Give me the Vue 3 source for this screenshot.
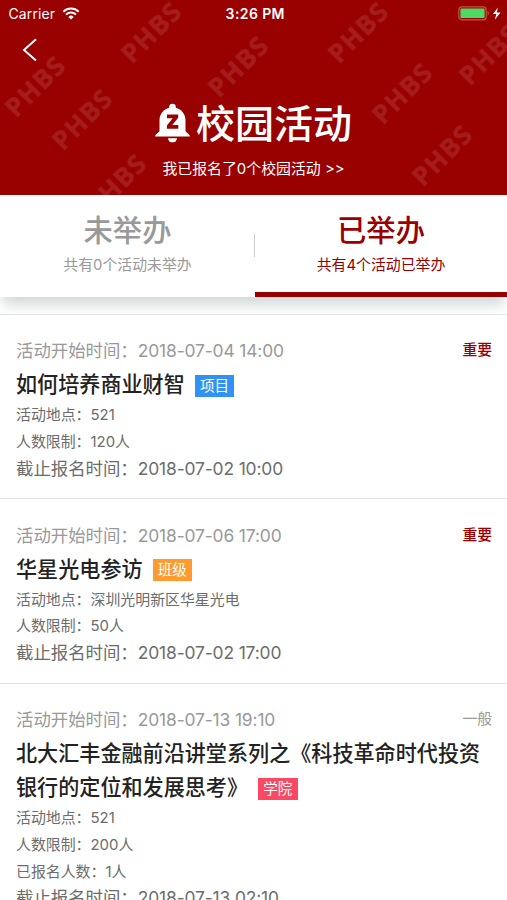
<script setup>
import { ref } from 'vue';

const activeTab = ref(1);

const watermarks = [
  { x: 35, y: 87 },
  { x: 82, y: 120 },
  { x: 151, y: 33 },
  { x: 116, y: 185 },
  { x: 238, y: 67 },
  { x: 358, y: 33 },
  { x: 402, y: 94 },
  { x: 489, y: 55 },
  { x: 442, y: 156 },
];

const tabs = [
  { title: '未举办', desc: '共有0个活动未举办' },
  { title: '已举办', desc: '共有4个活动已举办' },
];

const activities = [
  {
    start: '2018-07-04 14:00',
    level: '重要',
    title: '如何培养商业财智',
    tag: '项目',
    tagClass: 'blue',
    info: [['活动地点', '521'], ['人数限制', '120人']],
    deadline: '2018-07-02 10:00',
  },
  {
    start: '2018-07-06 17:00',
    level: '重要',
    title: '华星光电参访',
    tag: '班级',
    tagClass: 'orange',
    info: [['活动地点', '深圳光明新区华星光电'], ['人数限制', '50人']],
    deadline: '2018-07-02 17:00',
  },
  {
    start: '2018-07-13 19:10',
    level: '一般',
    title: '北大汇丰金融前沿讲堂系列之《科技革命时代投资银行的定位和发展思考》',
    tag: '学院',
    tagClass: 'pink',
    info: [['活动地点', '521'], ['人数限制', '200人'], ['已报名人数', '1人']],
    deadline: '2018-07-13 02:10',
  },
];
</script>

<template>
  <div class="page">
    <header class="header">
      <svg class="watermark" width="507" height="195" viewBox="0 0 507 195">
        <text
          v-for="(w, i) in watermarks"
          :key="i"
          :transform="`translate(${w.x} ${w.y}) rotate(-45)`"
          x="0"
          y="9"
          text-anchor="middle"
          textLength="72"
        >PHBS</text>
      </svg>

      <div class="status-bar">
        <div class="carrier">
          <span>Carrier</span>
          <svg width="18" height="13" viewBox="0 0 18 13">
            <path d="M1.3 4.7a11 11 0 0 1 15.4 0" fill="none" stroke="#fff" stroke-width="2" />
            <path d="M4 7.6a7.2 7.2 0 0 1 10 0" fill="none" stroke="#fff" stroke-width="2" />
            <path d="M9 12.6 6.3 9.9a3.9 3.9 0 0 1 5.4 0z" fill="#fff" />
          </svg>
        </div>
        <div class="clock">3:26 PM</div>
        <div class="power">
          <svg width="44" height="16" viewBox="0 0 44 16">
            <rect x="0.8" y="0.8" width="27.4" height="13" rx="3" fill="none" stroke="#c8553f" stroke-width="1.2" />
            <rect x="2.4" y="2.5" width="24.2" height="9.6" rx="1" fill="#4cd964" />
            <path d="M29.6 5.1c1.6.6 1.6 4 0 4.600z" fill="#c8553f" />
            <path d="M39.900 1.500 35 8.100h3.400l-1.600 5.700 5.700-7.300h-3.700z" fill="#fff" />
          </svg>
        </div>
      </div>

      <div class="nav">
        <svg width="16" height="24" viewBox="0 0 16 24">
          <path d="M14 1.300 2 12l12 10.600" fill="none" stroke="#fff" stroke-width="2" />
        </svg>
      </div>

      <div class="banner">
        <svg width="35" height="40" viewBox="0 0 35 40">
          <path
            fill="#fff"
            fill-rule="evenodd"
            d="M17.5.8a3.3 3.3 0 0 1 3.3 3.3v.7c6 1.5 9.7 6.6 9.7 12.7v10.3c0 1.6 4.4 3.2 4.4 5.6H.1c0-2.4 4.4-4 4.4-5.6V17.5c0-6.1 3.7-11.2 9.7-12.7v-.7A3.3 3.3 0 0 1 17.5.8zM12 11.4v3.9h5.7L11.9 22.4v3.4h11.4v-3.9h-6l5.9-7.1v-3.4z"
          />
          <path d="M13 35.3h9a4.5 4 0 0 1-9 0z" fill="#fff" />
        </svg>
        <h1>校园活动</h1>
      </div>
      <div class="signed">我已报名了0个校园活动 &gt;&gt;</div>
    </header>

    <div class="tabs">
      <div
        v-for="(tab, i) in tabs"
        :key="i"
        class="tab"
        :class="{ active: activeTab === i }"
        @click="activeTab = i"
      >
        <div class="tab-title">{{ tab.title }}</div>
        <div class="tab-desc">{{ tab.desc }}</div>
      </div>
    </div>

    <div class="list">
      <div v-for="(item, i) in activities" :key="i" class="card">
        <div class="start">
          <div>活动开始时间：<span class="date">{{ item.start }}</span></div>
          <div class="level" :class="{ important: item.level === '重要' }">{{ item.level }}</div>
        </div>
        <div class="title">{{ item.title }}<span class="tag" :class="item.tagClass">{{ item.tag }}</span></div>
        <div v-for="row in item.info" :key="row[0]" class="info">{{ row[0] }}：{{ row[1] }}</div>
        <div class="deadline">截止报名时间：<span class="date">{{ item.deadline }}</span></div>
      </div>
    </div>
  </div>
</template>

<style>
body {
  margin: 0;
  overflow: hidden;
}
</style>

<style scoped>
.page {
  width: 507px;
  height: 900px;
  overflow: hidden;
  background: #fff;
  font-family: Inter, "Noto Sans CJK SC", sans-serif;
}

.header {
  position: relative;
  height: 195px;
  background: #990000;
  color: #fff;
}

.watermark {
  position: absolute;
  top: 0;
  left: 0;
}

.watermark text {
  font-family: "Open Sans", sans-serif;
  font-weight: 700;
  font-size: 26px;
  fill: #a41c1c;
  stroke: #a41c1c;
  stroke-width: 0.6px;
}

.status-bar {
  position: relative;
  display: flex;
  align-items: center;
  height: 27px;
  padding: 0 5px 0 8.5px;
  font-size: 14px;
}

.carrier,
.power {
  flex: 1;
  display: flex;
  align-items: center;
  gap: 7px;
}

.carrier {
  letter-spacing: 0.1px;
}

.power {
  justify-content: flex-end;
}

.clock {
  font-weight: 600;
  font-size: 14px;
  letter-spacing: 0.4px;
}

.nav {
  position: relative;
  height: 69px;
  padding: 11px 0 0 22px;
  box-sizing: border-box;
}

.banner {
  position: relative;
  display: flex;
  align-items: center;
  justify-content: center;
  gap: 6px;
  height: 56px;
}

.banner svg {
  margin-top: -2px;
}

h1 {
  margin: 0;
  font-size: 39px;
  line-height: 56px;
  font-weight: 500;
}

.signed {
  position: relative;
  height: 34px;
  line-height: 34px;
  text-align: center;
  font-size: 14.9px;
}

.tabs {
  position: relative;
  display: flex;
  height: 102px;
  background: #fff;
  box-shadow: 0 11px 12px -3px #d3d9d9;
}

.tab {
  position: relative;
  flex: 1;
  padding-top: 15px;
  box-sizing: border-box;
  text-align: center;
  color: #999;
}

.tab:first-child {
  flex: 0 0 255px;
}

.tab:first-child::after {
  content: "";
  position: absolute;
  top: 39px;
  right: 0;
  width: 1px;
  height: 23px;
  background: #ccc;
}

.tab.active {
  color: #990000;
  border-bottom: 5px solid #990000;
}

.tab-title {
  font-size: 29.3px;
  line-height: 42px;
  font-weight: 500;
}

.tab-desc {
  font-size: 14.9px;
  line-height: 27px;
}

.list {
  position: relative;
  margin-top: 17px;
  background: #fff;
}

.card {
  padding: 18.4px 15px 16.3px 16px;
  border-top: 1px solid #e2e4e4;
}

.start {
  display: flex;
  justify-content: space-between;
  line-height: 35px;
  font-size: 17.4px;
  color: #999;
}

.date {
  letter-spacing: -0.13px;
}

.level {
  font-size: 14.8px;
}

.important {
  color: #990000;
  font-weight: 500;
}

.title {
  font-size: 21.1px;
  line-height: 34px;
  font-weight: 500;
  color: #222;
}

.tag {
  display: inline-block;
  width: 39.5px;
  height: 22px;
  margin-left: 10px;
  vertical-align: 1.4px;
  text-align: center;
  font-size: 14.6px;
  line-height: 22px;
  font-weight: 400;
  color: #fff;
}

.blue {
  background: #3091f7;
}

.orange {
  background: #ff9a2e;
}

.pink {
  background: #fb4964;
}

.info {
  font-size: 14.92px;
  line-height: 26.6px;
  color: #6c6c6c;
}

.deadline {
  font-size: 17.4px;
  line-height: 26.6px;
  color: #6c6c6c;
}
</style>
